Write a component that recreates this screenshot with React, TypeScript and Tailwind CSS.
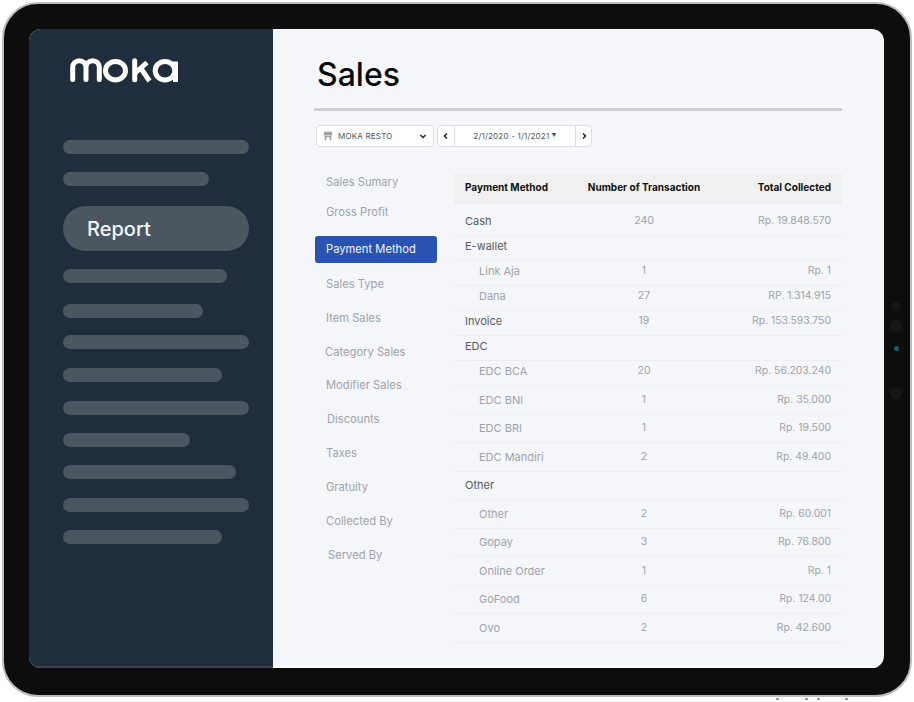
const sideBars = [
  "w-[186px] mt-[57px]",
  "w-[146px] mt-[18px]",
];

const sideBarsBelow = [
  "w-[164px] mt-[18px]",
  "w-[140px] mt-[21px]",
  "w-[186px] mt-[17px]",
  "w-[159px] mt-[19px]",
  "w-[186px] mt-[19px]",
  "w-[127px] mt-[18px]",
  "w-[173px] mt-[18px]",
  "w-[186px] mt-[19px]",
  "w-[159px] mt-[18px]",
];

const navItems = [
  { label: "Sales Sumary", cls: "mt-[28px]" },
  { label: "Gross Profit", cls: "mt-[16px]" },
  { label: "Payment Method", cls: "mt-[17px]", active: true },
  { label: "Sales Type", cls: "mt-[14px]" },
  { label: "Item Sales", cls: "mt-[20px]" },
  { label: "Category Sales", cls: "mt-[20px] -ml-[1px]" },
  { label: "Modifier Sales", cls: "mt-[19px]" },
  { label: "Discounts", cls: "mt-[20px] ml-[1px]" },
  { label: "Taxes", cls: "mt-[20px]" },
  { label: "Gratuity", cls: "mt-[20px]" },
  { label: "Collected By", cls: "mt-[20px]" },
  { label: "Served By", cls: "mt-[20px] ml-[2px]" },
];

const rows = [
  { name: "Cash", h: "h-[32px] pt-[2px]", count: "240", total: "Rp. 19.848.570", head: true },
  { name: "E-wallet", h: "h-[25px] pb-[4px]", head: true },
  { name: "Link Aja", h: "h-[25px] pb-[4px]", count: "1", total: "Rp. 1" },
  { name: "Dana", h: "h-[25px] pb-[4px]", count: "27", total: "RP. 1.314.915" },
  { name: "Invoice", h: "h-[25px] pb-[4px]", count: "19", total: "Rp. 153.593.750", head: true },
  { name: "EDC", h: "h-[25px] pb-[4px]", head: true },
  { name: "EDC BCA", h: "h-[25px] pb-[4px]", count: "20", total: "Rp. 56.203.240" },
  { name: "EDC BNI", h: "h-[28.5px]", count: "1", total: "Rp. 35.000" },
  { name: "EDC BRI", h: "h-[28.5px]", count: "1", total: "Rp. 19.500" },
  { name: "EDC Mandiri", h: "h-[28.5px]", count: "2", total: "Rp. 49.400" },
  { name: "Other", h: "h-[28.5px]", head: true },
  { name: "Other", h: "h-[28.5px]", count: "2", total: "Rp. 60.001" },
  { name: "Gopay", h: "h-[28.5px]", count: "3", total: "Rp. 76.800" },
  { name: "Online Order", h: "h-[28.5px]", count: "1", total: "Rp. 1" },
  { name: "GoFood", h: "h-[28.5px]", count: "6", total: "Rp. 124.00" },
  { name: "Ovo", h: "h-[28.5px]", count: "2", total: "Rp. 42.600" },
];

function MokaLogo() {
  return (
    <svg width="110" height="25" viewBox="0 0 110 25" fill="none" stroke="#ffffff" strokeWidth="5" strokeLinejoin="round">
      <path d="M2.7 21.5V9.3a6.65 6.65 0 0 1 13.3 0V21.5M16 9.3a6.65 6.65 0 0 1 13.3 0V21.5" strokeLinecap="round" />
      <ellipse cx="45.5" cy="12.7" rx="10" ry="9.2" />
      <path d="M64.7 2.8V21.8" strokeLinecap="round" />
      <path d="M64.7 15.5 77 4.5M71 10.5 79.5 23" />
      <ellipse cx="95" cy="12.7" rx="9.8" ry="9.2" />
      <path d="M105.5 3.5V24" />
    </svg>
  );
}

function StoreIcon() {
  return (
    <svg width="10" height="10" viewBox="0 0 10 10" fill="#9aa0a8">
      <path d="M1.5.8h7l1 2.6a1 1 0 0 1-1 1H1.5a1 1 0 0 1-1-1z" />
      <path d="M1.6 5h1.7v4.2H1.6zM6.7 5h1.7v4.2H6.7zM3.3 5h3.4v1.2H3.3z" />
    </svg>
  );
}

function Chevron({ dir }: { dir: "left" | "right" | "down" }) {
  const d = dir === "left" ? "M5 1.5 2.5 4 5 6.5" : dir === "right" ? "M3 1.5 5.5 4 3 6.5" : "M1.5 3 4 5.5 6.5 3";
  return (
    <svg width="8" height="8" viewBox="0 0 8 8" fill="none" stroke="#222" strokeWidth="1.5">
      <path d={d} />
    </svg>
  );
}

export default function App() {
  return (
    <div className="w-[914px] h-[702px] bg-white overflow-hidden font-['Inter',sans-serif]">
      <div className="relative ml-[2px] mt-[2px] w-[910px] h-[695px] rounded-[36px] border-2 border-[#bdbdbd] bg-[#0d0d0d] pl-[25px] pt-[25px]">
        <div className="w-[855px] h-[639px] rounded-[12px] overflow-hidden flex bg-[#f5f6fa]">
          <aside className="w-[244px] h-full bg-[#1f2d3d] pl-[34px] border-b-2 border-[#36424f]">
            <div className="pl-[7px] pt-[29px] h-[54px]">
              <MokaLogo />
            </div>
            {sideBars.map((c, i) => (
              <div key={i} className={`${c} h-[14px] rounded-full bg-[#4b5661]`} />
            ))}
            <div className="mt-[20px] w-[186px] h-[45px] rounded-full bg-[#4b5661] pl-[24px] flex items-center text-[#f4f5f6] text-[20px] font-medium">
              Report
            </div>
            {sideBarsBelow.map((c, i) => (
              <div key={i} className={`${c} h-[14px] rounded-full bg-[#4b5661]`} />
            ))}
          </aside>

          <main className="flex-1 pl-[41px] pr-[42px] border-b-2 border-white">
            <h1 className="pt-[25px] pl-[3px] h-[79px] text-[32px] leading-[42px] font-medium text-[#0a0a0a]">Sales</h1>
            <div className="h-[3px] bg-[#cfd1d5]" />

            <div className="flex mt-[14px] ml-[2px] h-[22px] text-[#4b5563] text-[8px] tracking-[0.2px]">
              <div className="w-[118px] rounded-[4px] border border-[#dcdde0] bg-white flex items-center pl-[6px] pr-[6px]">
                <StoreIcon />
                <span className="ml-[5px] flex-1">MOKA RESTO</span>
                <Chevron dir="down" />
              </div>
              <div className="ml-[3px] w-[155px] rounded-[4px] border border-[#dcdde0] bg-white flex items-center">
                <div className="w-[17px] h-full flex items-center justify-center border-r border-[#dcdde0]">
                  <Chevron dir="left" />
                </div>
                <div className="flex-1 flex items-center justify-center gap-[2px]">
                  2/1/2020 - 1/1/2021
                  <span className="text-[5px]">▼</span>
                </div>
                <div className="w-[16px] h-full flex items-center justify-center border-l border-[#dcdde0]">
                  <Chevron dir="right" />
                </div>
              </div>
            </div>

            <div className="flex">
              <nav className="w-[122px] mr-[17px] ml-[1px] text-[11.2px] leading-[14px] text-[#9ea3aa]">
                {navItems.map((n) =>
                  n.active ? (
                    <div key={n.label} className={`${n.cls} h-[27px] pb-[2px] rounded-[3px] bg-[#2a52b2] text-[#f0f3fb] flex items-center pl-[11px]`}>
                      {n.label}
                    </div>
                  ) : (
                    <div key={n.label} className={`${n.cls} pl-[11px]`}>
                      {n.label}
                    </div>
                  ),
                )}
              </nav>

              <div className="w-[388px] mt-[26px]">
                <div className="h-[31px] pb-[2px] bg-[#f0f0f0] flex items-center text-[10px] font-bold text-[#111]">
                  <div className="w-[130px] pl-[11px]">Payment Method</div>
                  <div className="w-[120px] text-center">Number of Transaction</div>
                  <div className="flex-1 text-right pr-[11px]">Total Collected</div>
                </div>
                {rows.map((r, i) => (
                  <div key={i} className={`${r.h} flex items-center border-b border-[#eceef2] text-[11px] leading-[14px] text-[#9ea3aa]`}>
                    <div className={r.head ? "w-[130px] pl-[11px] text-[#555b63]" : "w-[130px] pl-[25px]"}>{r.name}</div>
                    <div className="w-[120px] text-center text-[10.5px]">{r.count}</div>
                    <div className="flex-1 text-right pr-[11px] text-[10.4px]">{r.total}</div>
                  </div>
                ))}
              </div>
            </div>
          </main>
        </div>

        <div className="absolute right-[8px] top-[297px] w-[12px] flex flex-col items-center">
          <div className="w-[8px] h-[8px] rounded-full bg-[#161616]" />
          <div className="mt-[11px] w-[12px] h-[12px] rounded-full bg-[#161616]" />
          <div className="mt-[14px] w-[5px] h-[5px] rounded-full bg-[#1f5a68]" />
          <div className="mt-[17px] w-[2px] h-[2px] rounded-full bg-[#1c1c1c]" />
          <div className="mt-[17px] w-[12px] h-[12px] rounded-full bg-[#161616]" />
        </div>
      </div>

      <div className="flex ml-[776px] mt-[1px]">
        <div className="w-[3px] h-[2px] bg-[#999]" />
        <div className="ml-[26px] w-[3px] h-[2px] bg-[#999]" />
        <div className="ml-[9px] w-[3px] h-[2px] bg-[#999]" />
        <div className="ml-[25px] w-[3px] h-[2px] bg-[#999]" />
      </div>
    </div>
  );
}
